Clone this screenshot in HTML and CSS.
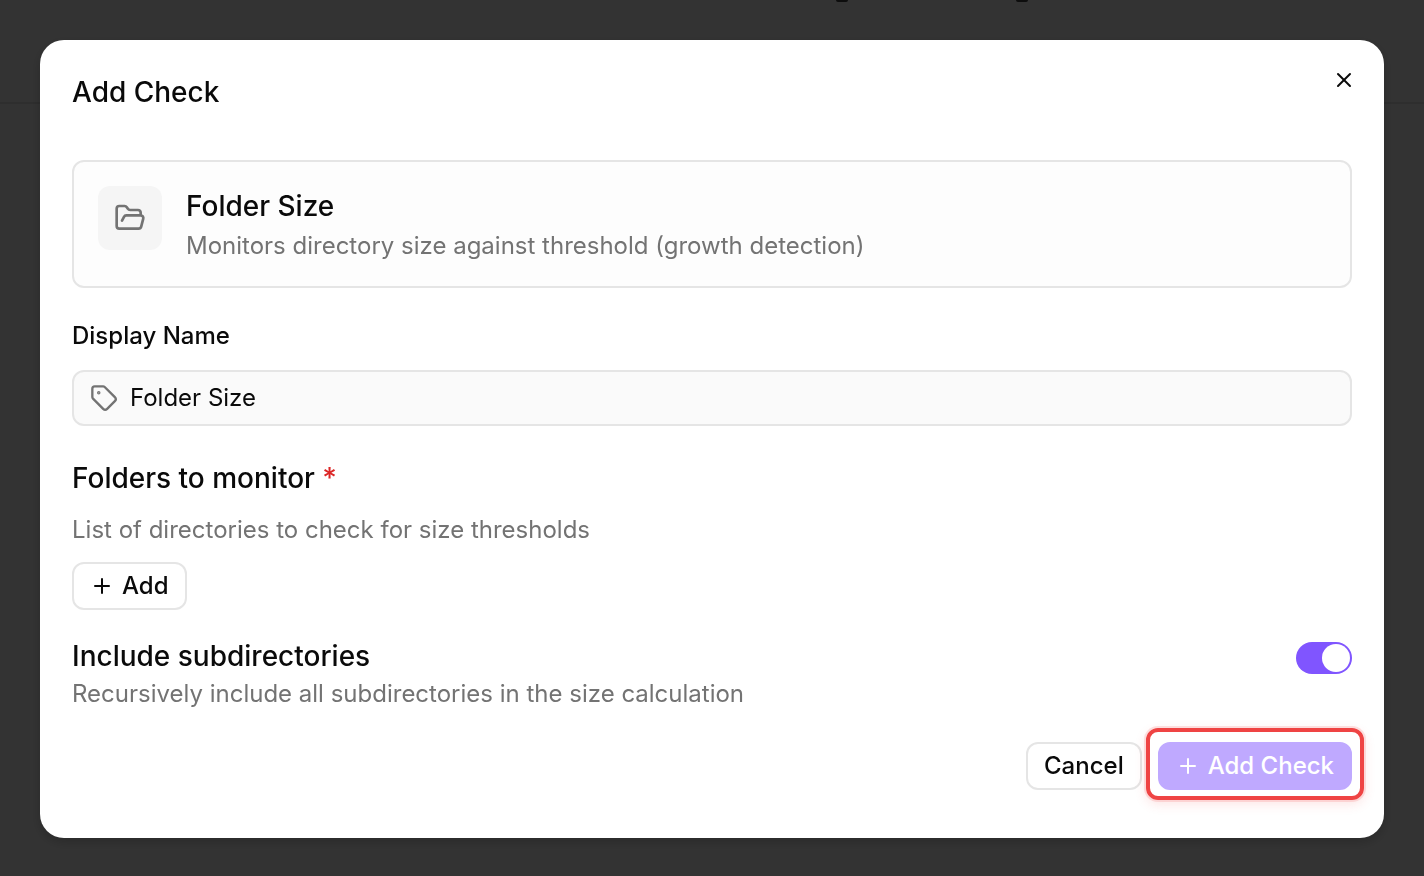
FILE: index.html
```
<!DOCTYPE html>
<html lang="en">
<head>
  <meta charset="UTF-8">
  <meta name="viewport" content="width=device-width, initial-scale=1">
  <title>Add Check</title>
  <link rel="stylesheet" href="styles.css">
</head>
<body>

  <div class="page-header">
    <span class="page-mark"></span>
    <span class="page-mark"></span>
  </div>

  <div class="overlay">
    <form class="modal" role="dialog" aria-labelledby="dialogTitle">
      <button type="button" class="close" aria-label="Close">
        <svg class="icon" viewBox="0 0 24 24"><path d="M18 6 6 18"/><path d="m6 6 12 12"/></svg>
      </button>

      <h2 id="dialogTitle" class="title">Add Check</h2>

      <div class="check-card">
        <div class="check-icon">
          <svg class="icon icon-lg" viewBox="0 0 24 24"><path d="m6 14 1.5-2.9A2 2 0 0 1 9.24 10H20a2 2 0 0 1 1.94 2.5l-1.54 6a2 2 0 0 1-1.95 1.5H4a2 2 0 0 1-2-2V5a2 2 0 0 1 2-2h3.9a2 2 0 0 1 1.69.9l.81 1.2a2 2 0 0 0 1.67.9H18a2 2 0 0 1 2 2v2"/></svg>
        </div>
        <div>
          <h3 class="check-name">Folder Size</h3>
          <p class="hint">Monitors directory size against threshold (growth detection)</p>
        </div>
      </div>

      <div class="field">
        <label class="label" for="displayName">Display Name</label>
        <div class="text-box">
          <svg class="icon icon-md" viewBox="0 0 24 24"><path d="M12.586 2.586A2 2 0 0 0 11.172 2H4a2 2 0 0 0-2 2v7.172a2 2 0 0 0 .586 1.414l8.704 8.704a2.426 2.426 0 0 0 3.42 0l6.58-6.58a2.426 2.426 0 0 0 0-3.42z"/><circle class="dot" cx="7.5" cy="7.5" r=".5"/></svg>
          <input type="text" id="displayName" name="displayName" value="Folder Size">
        </div>
      </div>

      <div class="field folders">
        <h3 class="heading">Folders to monitor <span class="required">*</span></h3>
        <p class="hint">List of directories to check for size thresholds</p>
        <button type="button" class="btn">
          <svg class="icon" viewBox="0 0 24 24"><path d="M5 12h14"/><path d="M12 5v14"/></svg>
          Add
        </button>
      </div>

      <div class="switch-row">
        <div>
          <label class="switch-label" for="subdirs">Include subdirectories</label>
          <p class="hint">Recursively include all subdirectories in the size calculation</p>
        </div>
        <input type="checkbox" id="subdirs" name="subdirs" class="switch" checked>
      </div>

      <div class="buttons">
        <button type="button" class="btn">Cancel</button>
        <div class="highlight">
          <button type="submit" class="btn btn-primary" disabled>
            <svg class="icon" viewBox="0 0 24 24"><path d="M5 12h14"/><path d="M12 5v14"/></svg>
            Add Check
          </button>
        </div>
      </div>
    </form>
  </div>

</body>
</html>
```
FILE: styles.css
```
* {
  box-sizing: border-box;
}
body {
  font-family: Inter, sans-serif;
  font-size: 24px;
  line-height: 32px;
  color: #0a0a0a;
  background: #ffffff;
  margin: 0;
}
h2, h3, p {
  margin: 0;
}
button, input {
  font: inherit;
  color: inherit;
}

/* Page behind the dialog */
.page-header {
  display: flex;
  gap: 168px;
  height: 104px;
  padding-left: 836px;
  border-bottom: 2px solid #e5e5e5;
}
.page-mark {
  width: 12px;
  height: 2px;
  background: #404040;
  border-radius: 0 0 6px 6px;
}

.overlay {
  position: fixed;
  inset: 0;
  padding: 40px;
  background: rgba(0, 0, 0, 0.8);
  overflow: auto;
}
.modal {
  position: relative;
  padding: 32px 32px 48px;
  background: #ffffff;
  border-radius: 24px;
  box-shadow: 0 4px 12px rgba(0, 0, 0, 0.2);
}
.title, .check-name, .heading {
  font-size: 28px;
  line-height: 40px;
  font-weight: 500;
}
.title {
  margin-bottom: 48px;
}
.close {
  position: absolute;
  top: 28px;
  right: 28px;
  display: flex;
  padding: 0;
  border: none;
  background: none;
  cursor: pointer;
}

.icon {
  flex: none;
  width: 24px;
  height: 24px;
  fill: none;
  stroke: currentColor;
  stroke-width: 2;
  stroke-linecap: round;
  stroke-linejoin: round;
}
.icon-md {
  width: 28px;
  height: 28px;
  color: #737373;
}
.icon-lg {
  width: 32px;
  height: 32px;
}
.dot {
  fill: currentColor;
}

.check-card {
  display: flex;
  align-items: flex-start;
  gap: 24px;
  padding: 24px;
  background: #fdfdfd;
  border: 2px solid #e5e5e5;
  border-radius: 12px;
}
.check-icon {
  display: flex;
  padding: 16px;
  color: #737373;
  background: #f5f5f5;
  border-radius: 12px;
}
.check-name {
  margin-bottom: 4px;
}
.hint {
  color: #737373;
}

.field {
  margin-top: 32px;
}
.label {
  display: block;
  margin-bottom: 18px;
  font-weight: 500;
}
.text-box {
  display: flex;
  align-items: center;
  gap: 12px;
  height: 56px;
  padding: 0 16px;
  background: #fafafa;
  border: 2px solid #e5e5e5;
  border-radius: 12px;
}
.text-box input {
  flex: 1;
  min-width: 0;
  padding: 0;
  border: none;
  outline: none;
  background: none;
}
.folders {
  display: flex;
  flex-direction: column;
  align-items: flex-start;
  gap: 16px;
}
.required {
  color: #dc2626;
}

.btn {
  display: flex;
  align-items: center;
  gap: 8px;
  height: 48px;
  padding: 0 16px;
  font-weight: 500;
  background: #ffffff;
  border: 2px solid #e5e5e5;
  border-radius: 12px;
  cursor: pointer;
}
.btn-primary {
  color: #ffffff;
  background: #8055ff;
  border-color: #8055ff;
}
.btn-primary:disabled {
  opacity: 0.5;
  cursor: default;
}

.switch-row {
  display: flex;
  justify-content: space-between;
  align-items: flex-start;
  gap: 32px;
  margin-top: 28px;
}
.switch-label {
  display: block;
  margin-bottom: 4px;
  font-size: 28px;
  line-height: 36px;
  font-weight: 500;
}
.switch {
  appearance: none;
  flex: none;
  display: flex;
  width: 56px;
  height: 32px;
  margin: 4px 0 0;
  padding: 2px;
  background: #d4d4d4;
  border-radius: 16px;
  cursor: pointer;
}
.switch::before {
  content: "";
  width: 28px;
  height: 28px;
  background: #ffffff;
  border-radius: 50%;
}
.switch:checked {
  justify-content: flex-end;
  background: #8055ff;
}

.buttons {
  display: flex;
  justify-content: flex-end;
  gap: 16px;
  margin-top: 32px;
}
.highlight {
  position: relative;
}
.highlight::after {
  content: "";
  position: absolute;
  inset: -14px -12px -10px;
  border: 4px solid #ef4444;
  border-radius: 12px;
  box-shadow: 0 0 0 2px rgba(239, 68, 68, 0.15), 0 4px 12px rgba(239, 68, 68, 0.15);
  pointer-events: none;
}
```
